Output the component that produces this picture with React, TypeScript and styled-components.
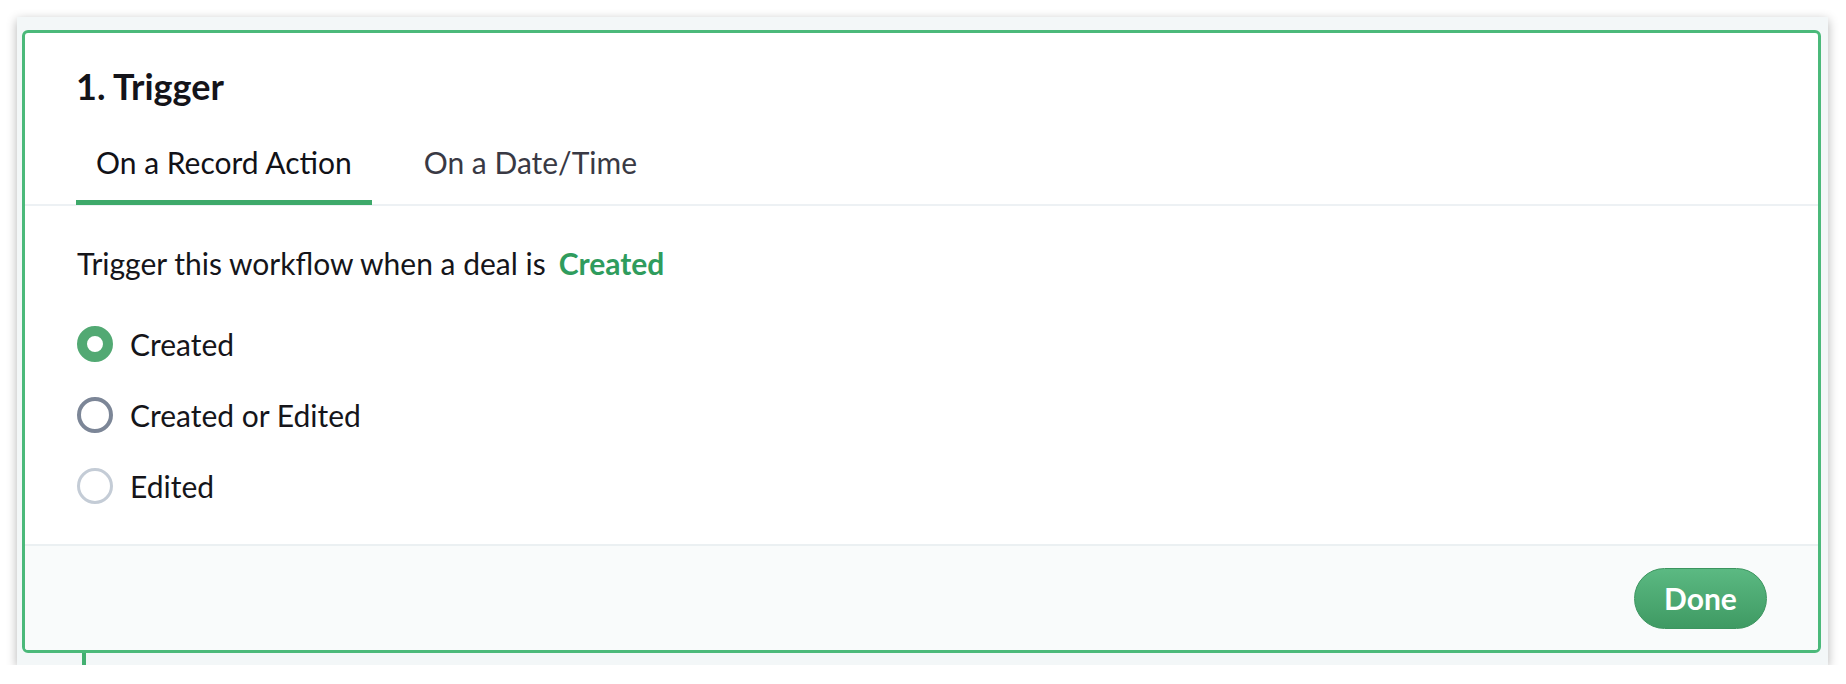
import React from "react"
import styled, { createGlobalStyle } from "styled-components"

const GlobalStyle = createGlobalStyle`
  html, body {
    margin: 0;
    padding: 0;
    background: #ffffff;
    font-family: Lato, "Open Sans", "Liberation Sans", sans-serif;
  }
`

const Page = styled.div`
  padding: 17px 18px 0 17px;
`

const Frame = styled.div`
  width: 1811px;
  height: 648px;
  box-sizing: border-box;
  padding: 13px 7px 0 5px;
  background: #f3f7f8;
  box-shadow: 0 3px 10px rgba(0, 0, 0, 0.3);
  display: flex;
  flex-direction: column;
`

const Card = styled.div`
  height: 623px;
  box-sizing: border-box;
  border: 3px solid #4bb97a;
  border-radius: 6px;
  background: #ffffff;
  display: flex;
  flex-direction: column;
  overflow: hidden;
`

const Connector = styled.div`
  width: 4px;
  height: 12px;
  margin-left: 60px;
  background: #43b071;
`

const Header = styled.div`
  padding: 32px 51px 0 51px;
  border-bottom: 2px solid #edf1f4;
`

const Title = styled.h1`
  margin: 0;
  font-size: 36px;
  line-height: 42px;
  font-weight: 700;
  color: #14141a;
`

const Tabs = styled.div`
  display: flex;
  gap: 32px;
  margin-top: 37px;
  margin-bottom: -1px;
`

const Tab = styled.div<{ $active?: boolean }>`
  padding: 0 20px 20px 20px;
  font-size: 30px;
  line-height: 36px;
  color: ${(p) => (p.$active ? "#111117" : "#393944")};
  border-bottom: 5px solid ${(p) => (p.$active ? "#3ea96a" : "transparent")};
`

const Body = styled.div`
  flex: 1;
  padding: 39px 51px 0 52px;
`

const Sentence = styled.p`
  margin: 0;
  font-size: 30px;
  line-height: 36px;
  color: #15151a;
`

const Status = styled.span`
  margin-left: 13px;
  color: #2f9c5d;
  font-weight: 700;
`

const Options = styled.div`
  display: flex;
  flex-direction: column;
  gap: 35px;
  margin-top: 45px;
`

const Option = styled.label`
  display: flex;
  align-items: center;
  gap: 17px;
  height: 36px;
`

const Radio = styled.span<{ $state: "on" | "hover" | "off" }>`
  width: 36px;
  height: 36px;
  box-sizing: border-box;
  border-radius: 50%;
  flex-shrink: 0;
  background: #ffffff;
  border: ${(p) =>
    p.$state === "on"
      ? "10.5px solid #52a973"
      : p.$state === "hover"
      ? "4px solid #7c8697"
      : "3.5px solid #c4ccd6"};
`

const OptionLabel = styled.span`
  font-size: 30px;
  line-height: 36px;
  color: #15151a;
`

const Footer = styled.div`
  height: 104px;
  border-top: 2px solid #ebf0f2;
  background: #f9fbfb;
  display: flex;
  align-items: center;
  justify-content: flex-end;
  padding: 0 51px;
`

const DoneButton = styled.button`
  width: 133px;
  height: 61px;
  border-radius: 31px;
  border: 1px solid #3c955f;
  background: linear-gradient(#5bb982, #3f9a63);
  color: #ffffff;
  font-family: Lato, "Open Sans", "Liberation Sans", sans-serif;
  font-size: 30px;
  font-weight: 700;
  cursor: pointer;
`

const options: { label: string; state: "on" | "hover" | "off" }[] = [
  { label: "Created", state: "on" },
  { label: "Created or Edited", state: "hover" },
  { label: "Edited", state: "off" },
]

const App = () => (
  <Page>
    <GlobalStyle />
    <Frame>
      <Card>
        <Header>
          <Title>1. Trigger</Title>
          <Tabs>
            <Tab $active>On a Record Action</Tab>
            <Tab>On a Date/Time</Tab>
          </Tabs>
        </Header>
        <Body>
          <Sentence>
            Trigger this workflow when a deal is
            <Status>Created</Status>
          </Sentence>
          <Options>
            {options.map((o) => (
              <Option key={o.label}>
                <Radio $state={o.state} />
                <OptionLabel>{o.label}</OptionLabel>
              </Option>
            ))}
          </Options>
        </Body>
        <Footer>
          <DoneButton>Done</DoneButton>
        </Footer>
      </Card>
      <Connector />
    </Frame>
  </Page>
)

export default App
